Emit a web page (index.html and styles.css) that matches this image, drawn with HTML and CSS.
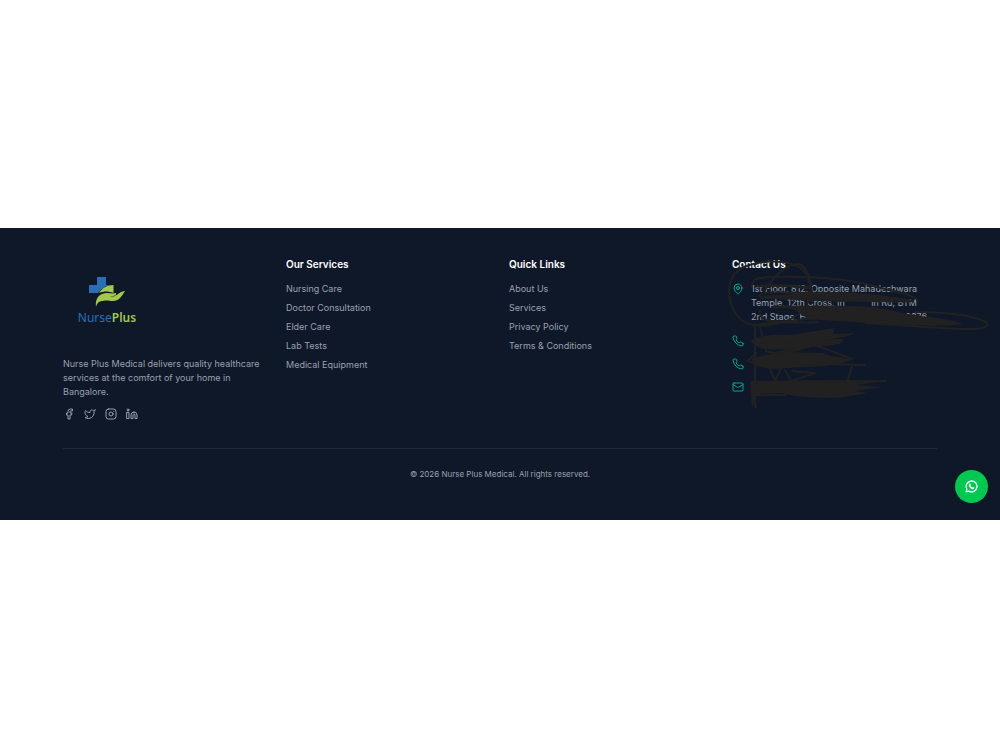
FILE: index.html
```html
<!DOCTYPE html>
<html lang="en">
<head>
  <meta charset="UTF-8">
  <meta name="viewport" content="width=device-width, initial-scale=1.0">
  <title>Nurse Plus Medical</title>
  <link rel="stylesheet" href="styles.css">
</head>
<body>
  <footer class="footer">
    <div class="container">
      <div class="columns">
        <div class="brand">
          <a class="logo" href="#" aria-label="NursePlus">
            <svg class="logo-mark" viewBox="0 0 36 30" aria-hidden="true">
              <path fill="#2a6fb5" d="M8 0h9v8h3C15 10 12 12 9 16H0V8h8z"/>
              <path fill="#a4c848" d="M10 16C13 11 18 8 24.500 8v8C19 14 15 14 10 16z"/>
              <path fill="#a4c848" d="M7 30C6 21 10 17 17 16c4 0 6 1 10 0 1 2-2 3-6 4 7 0 8-5 15-6-3 5-6 10-12 10-4 0-6-1-10 0-4 0-6 2-7 6z"/>
            </svg>
            <span class="logo-name"><span class="nurse">Nurse</span><span class="plus">Plus</span></span>
          </a>
          <p>Nurse Plus Medical delivers quality healthcare services at the comfort of your home in Bangalore.</p>
          <div class="social">
            <a href="#" aria-label="Facebook"><svg class="icon" viewBox="0 0 24 24"><path d="M18 2h-3a5 5 0 0 0-5 5v3H7v4h3v8h4v-8h3l1-4h-4V7a1 1 0 0 1 1-1h3z"/></svg></a>
            <a href="#" aria-label="Twitter"><svg class="icon" viewBox="0 0 24 24"><path d="M22 4s-.7 2.100-2 3.400c1.600 10-9.400 17.300-18 11.600 2.200.1 4.400-.6 6-2C3 15.500.5 9.600 3 5c2.200 2.600 5.600 4.100 9 4-.9-4.200 4-6.600 7-3.800 1.100 0 3-1.200 3-1.200z"/></svg></a>
            <a href="#" aria-label="Instagram"><svg class="icon" viewBox="0 0 24 24"><rect x="2" y="2" width="20" height="20" rx="5"/><circle cx="12" cy="12" r="4"/><path d="M17.500 6.500h.01"/></svg></a>
            <a href="#" aria-label="LinkedIn"><svg class="icon" viewBox="0 0 24 24"><path d="M16 8a6 6 0 0 1 6 6v7h-4v-7a2 2 0 0 0-4 0v7h-4v-7a6 6 0 0 1 6-6z"/><path d="M2 9h4v12H2z"/><circle cx="4" cy="4" r="2"/></svg></a>
          </div>
        </div>

        <div>
          <h3>Our Services</h3>
          <ul class="links">
            <li><a href="#">Nursing Care</a></li>
            <li><a href="#">Doctor Consultation</a></li>
            <li><a href="#">Elder Care</a></li>
            <li><a href="#">Lab Tests</a></li>
            <li><a href="#">Medical Equipment</a></li>
          </ul>
        </div>

        <div>
          <h3>Quick Links</h3>
          <ul class="links">
            <li><a href="#">About Us</a></li>
            <li><a href="#">Services</a></li>
            <li><a href="#">Privacy Policy</a></li>
            <li><a href="#">Terms &amp; Conditions</a></li>
          </ul>
        </div>

        <div class="contact">
          <h3>Contact Us</h3>
          <ul class="contact-list">
            <li>
              <svg class="icon" viewBox="0 0 24 24"><path d="M20 10c0 5-5.500 10.200-7.400 11.800a1 1 0 0 1-1.200 0C9.500 20.200 4 15 4 10a8 8 0 0 1 16 0z"/><circle cx="12" cy="10" r="3"/></svg>
              <address>
                <span>1st Floor, 812, Opposite Mahadeshwara</span>
                <span class="split"><span>Temple, 12th Cross, In</span><span>in Rd, BTM</span></span>
                <span class="split wide"><span>2nd Stage, H</span><span>0076</span></span>
              </address>
            </li>
            <li><svg class="icon" viewBox="0 0 24 24"><path d="M22 16.920v3a2 2 0 0 1-2.200 2A19.800 19.800 0 0 1 2.100 4.200 2 2 0 0 1 4.100 2h3a2 2 0 0 1 2 1.700c.1 1 .4 1.900.7 2.800a2 2 0 0 1-.5 2.100L8.100 9.900a16 16 0 0 0 6 6l1.300-1.300a2 2 0 0 1 2.100-.4c.9.300 1.800.6 2.800.7a2 2 0 0 1 1.700 2z"/></svg></li>
            <li><svg class="icon" viewBox="0 0 24 24"><path d="M22 16.920v3a2 2 0 0 1-2.200 2A19.800 19.800 0 0 1 2.100 4.200 2 2 0 0 1 4.100 2h3a2 2 0 0 1 2 1.700c.1 1 .4 1.900.7 2.800a2 2 0 0 1-.5 2.100L8.100 9.900a16 16 0 0 0 6 6l1.300-1.300a2 2 0 0 1 2.100-.4c.9.300 1.800.6 2.800.7a2 2 0 0 1 1.700 2z"/></svg></li>
            <li><svg class="icon" viewBox="0 0 24 24"><rect x="2" y="4" width="20" height="16" rx="2"/><path d="m22 7-9 5.700a2 2 0 0 1-2 0L2 7"/></svg></li>
          </ul>

          <!-- marker strokes over the private details -->
          <svg class="scribble" viewBox="720 250 280 170" aria-hidden="true">
            <g class="thin">
              <path d="M809 282C806 258 764 258 744 267c-20 9-18 38-4 52 14 12 45 6 60-6 14-12 12-30 9-31z"/>
              <path d="M765 290c8-12 20-26 34-26 8 2 11 14 13 28"/>
              <path d="M752 286c0-8 8-9 24-9 40-1 75 2 105 11 15 4 32 6 36 12"/>
              <path d="M760 295c0-4 30-3 60-1 40 1 70 4 93 7-15 2-40-1-70 0-30 0-60-4-82-3z"/>
              <path d="M915 312c30 0 50 2 66 8 13 4 5 9-10 9-30 0-65-4-105-6"/>
              <path d="M760 311c-3 12 20 12 45 8 35-3 75-1 112 3"/>
            </g>
            <path d="M790 292c35-1 60 0 90 3l34 5-34 1c-30 2-60-2-90-5z"/>
            <path d="M790 307c30-3 60-1 85 0l34 7c20 4 40 4 54 10-30 4-80 0-155-5z"/>
            <g class="thick">
              <path d="M756 286c20-1 40 0 55 2M765 297c15-1 35-1 55 0"/>
              <path d="M774 307c16-1 30 0 50 2"/>
            </g>
            <path d="M750 341c10-6 27-7 40-6l45-7-2 6 22-1c-8 5-24 5-32 8 15-3 22-3 20 1-10 6-36 3-49 7-15 1-30 1-36-2z"/>
            <path d="M752 359c10-5 25-5 36-7l35 1 8 3 22 3c-18 9-44 7-66 9-11 1-22 2-34-4z"/>
            <path d="M750 382c35-2 85-2 135-1l-30 4 28 2-28 4 13 2-18 3c-12 3-38 2-55 0l-14-3-24 1-5 14z"/>
            <g class="thin">
              <path d="M755 324v83M760 327l6 24c12 5 20-2 36-4l40-7M750 362l115 3M748 361l8-8M782 354l33-9 37 14M770 368l5 13 6-12M785 370l6 11 24-8-23-2M852 366l-5 17M755 395h31M752 382l4 25M752 382l134-1"/>
              <path d="M753 326c20-6 38-2 65-4M760 345l52-5 28 3"/>
            </g>
          </svg>
        </div>
      </div>

      <p class="copyright">© 2026 Nurse Plus Medical. All rights reserved.</p>
    </div>

    <a class="whatsapp" href="#" aria-label="WhatsApp">
      <svg viewBox="0 0 24 24"><path fill="none" stroke="#fff" stroke-width="2.400" stroke-linejoin="round" d="M2 22l1.500-5.200a10 10 0 1 1 3.700 3.700z"/><path fill="#fff" d="M8.500 6.500l1.500.3 1 2.500-1 1.300c.8 1.600 2 2.700 3.600 3.400l1.200-1.300 2.500 1.200c.3 1.800-1.300 3.200-3 3-4-.6-7-3.700-7.400-7.200-.1-1.400.6-2.700 1.600-3.200z"/></svg>
    </a>
  </footer>
</body>
</html>
```

FILE: styles.css
```css
* {
  box-sizing: border-box;
}

body {
  margin: 0;
  min-height: 100vh;
  padding-bottom: 2px;
  display: flex;
  align-items: center;
  background: #fff;
  font-family: Inter, "Liberation Sans", sans-serif;
  font-size: 9px;
  line-height: 14px;
  color: #99a1af;
}

a {
  color: inherit;
  text-decoration: none;
}

h3 {
  margin: 0 0 10px;
  font-size: 10px;
  line-height: 16px;
  font-weight: 600;
  color: #fff;
}

p {
  margin: 0;
}

ul {
  margin: 0;
  padding: 0;
  list-style: none;
}

.footer {
  position: relative;
  width: 100%;
  padding: 28px 63px 39px;
  background: #0f1828;
}

.columns {
  display: grid;
  grid-template-columns: repeat(4, minmax(0, 1fr));
  gap: 18px;
  padding-bottom: 28px;
}

.logo {
  display: flex;
  flex-direction: column;
  align-items: center;
  width: 88px;
  height: 101px;
  padding-top: 21px;
}

.logo-mark {
  width: 36px;
  height: 30px;
}

.logo-name {
  font-family: "Noto Sans", sans-serif;
  font-size: 12px;
  line-height: 22px;
}

.nurse {
  color: #2a6fb5;
}

.plus {
  color: #a4c848;
  font-weight: 600;
}

.icon {
  display: block;
  flex: none;
  width: 12px;
  height: 12px;
  fill: none;
  stroke: currentColor;
  stroke-width: 2;
  stroke-linecap: round;
  stroke-linejoin: round;
}

.social {
  display: flex;
  gap: 9px;
  margin-top: 9px;
}

.links {
  display: grid;
  gap: 5px;
}

.contact {
  position: relative;
}

.contact-list {
  display: grid;
  gap: 10px;
}

.contact-list li {
  display: flex;
  gap: 7px;
}

.contact-list .icon {
  margin-top: 1px;
  color: #00a892;
}

address {
  font-style: normal;
  white-space: nowrap;
}

address > span {
  display: block;
}

address .split {
  display: flex;
  justify-content: space-between;
  width: 166px;
}

address .wide {
  width: 176px;
}

.scribble {
  position: absolute;
  left: -12px;
  top: -6px;
  width: 280px;
  height: 170px;
  fill: #212121;
  pointer-events: none;
}

.thin,
.thick {
  fill: none;
  stroke: #212121;
  stroke-linecap: round;
  stroke-linejoin: round;
}

.thin {
  stroke-width: 2;
}

.thick {
  stroke-width: 3;
}

.copyright {
  padding-top: 18px;
  border-top: 1px solid #1e2939;
  font-size: 8px;
  text-align: center;
}

.whatsapp {
  position: absolute;
  right: 12px;
  bottom: 17px;
  display: flex;
  align-items: center;
  justify-content: center;
  width: 33px;
  height: 33px;
  border-radius: 50%;
  background: #00c950;
}

.whatsapp svg {
  width: 13px;
  height: 13px;
}
```
